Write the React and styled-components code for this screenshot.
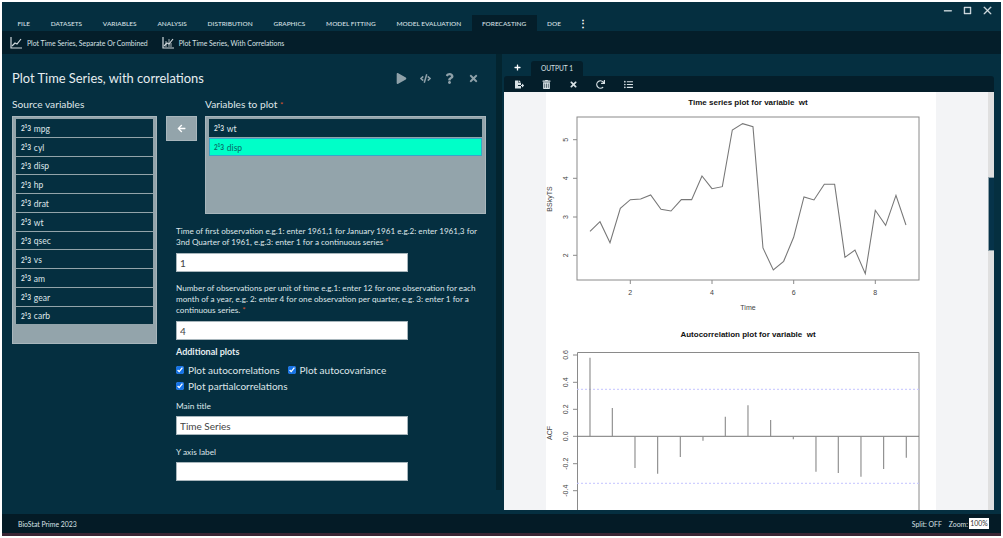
import React from 'react';
import styled, { createGlobalStyle } from 'styled-components';
import {
  FaPlay, FaCode, FaQuestion, FaTimes, FaArrowLeft, FaPlus, FaFileExport,
  FaTrashAlt, FaRedo, FaListUl,
} from 'react-icons/fa';
import { VscChromeMinimize, VscChromeMaximize, VscChromeClose } from 'react-icons/vsc';

const GlobalStyle = createGlobalStyle`
  html, body {
    margin: 0;
    padding: 0;
    background: #fff;
    overflow: hidden;
  }
  * { box-sizing: border-box; }
`;

const UI_FONT = `Lato, "Noto Sans", sans-serif`;

const tabs = ['File', 'Datasets', 'Variables', 'Analysis', 'Distribution', 'Graphics', 'Model Fitting', 'Model Evaluation', 'Forecasting', 'DOE'];
const sourceVars = ['mpg', 'cyl', 'disp', 'hp', 'drat', 'wt', 'qsec', 'vs', 'am', 'gear', 'carb'];

const seriesPoints = '150,424 180,395 210,458 241,355 271,329 302,327 332,315 363,358 393,363 424,329 455,329 486,258 516,296 547,290 577,120 608,101 639,110 669,474 700,540 731,514 761,442 792,321 822,330 853,283 884,283 915,502 945,480 976,551 1006,361 1037,406 1068,316 1098,405';
const acfBars = [[150, 113], [217, 264], [285, 444], [353, 461], [421, 411], [489, 362], [556, 290], [624, 256], [692, 300], [760, 358], [828, 455], [895, 459], [963, 470], [1031, 447], [1099, 413]];

const LineChartIcon = ({ bars }) => (
  <svg width="12" height="12" viewBox="0 0 12 12" fill="none" stroke="#d0d8dc" strokeWidth="1.2">
    <path d="M1 0v11h11" />
    <path d="M2 9l3-3 2 1 4-5" />
    {bars && <path d="M4 10V4M7 10V2M9 10V6" strokeWidth=".8" />}
  </svg>
);

const PlotImage = () => (
  <PlotSvg viewBox="546 92 390 418">
    <ChartTitle x="748" y="104.5">Time series plot for variable  wt</ChartTitle>
    <rect x="577" y="117" width="342" height="163" fill="none" stroke="#8a8a8a" />
    <g transform="translate(540 90) scale(0.3333)">
      <polyline points={seriesPoints} fill="none" stroke="#777" strokeWidth="3.2" />
    </g>
    <path d="M577 139.7h-4M577 178.3h-4M577 217h-4M577 255.3h-4M630.3 280v4M712 280v4M793.7 280v4M875.3 280v4" stroke="#8a8a8a" />
    {[['5', 139.7], ['4', 178.3], ['3', 217], ['2', 255.3]].map(([t, y]) => (
      <AxisText key={t} transform={`translate(568 ${y}) rotate(-90)`}>{t}</AxisText>
    ))}
    {[['2', 630.3], ['4', 712], ['6', 793.7], ['8', 875.3]].map(([t, x]) => (
      <AxisText key={t} x={x} y="295">{t}</AxisText>
    ))}
    <AxisText x="748" y="310">Time</AxisText>
    <AxisText transform="translate(552 199) rotate(-90)">BSkyTS</AxisText>

    <ChartTitle x="748" y="336.5">Autocorrelation plot for variable  wt</ChartTitle>
    <path d="M577.5 520V352.5H919V520" fill="none" stroke="#8a8a8a" />
    <path d="M577 436.3h342" stroke="#777" />
    <path d="M577 389.3h342M577 483.3h342" stroke="#c4c4ff" strokeDasharray="2 2" />
    <g transform="translate(540 320) scale(0.3333)">
      {acfBars.map(([x, y]) => (
        <line key={x} x1={x} x2={x} y1={349} y2={y} stroke="#8c8c8c" strokeWidth="3.4" />
      ))}
    </g>
    <path d="M577 355h-4M577 382.3h-4M577 409.3h-4M577 436.3h-4M577 463.7h-4M577 490.7h-4" stroke="#8a8a8a" />
    {[['0.6', 355], ['0.4', 382.3], ['0.2', 409.3], ['0.0', 436.3], ['-0.2', 463.7], ['-0.4', 490.7]].map(([t, y]) => (
      <AxisText key={t} transform={`translate(568 ${y}) rotate(-90)`}>{t}</AxisText>
    ))}
    <AxisText transform="translate(552 433) rotate(-90)">ACF</AxisText>
  </PlotSvg>
);

const VarItem = ({ name, selected }) => (
  <Item $selected={selected}>
    <NumIcon>2<sup>1</sup>3</NumIcon>
    {name}
  </Item>
);

const App = () => (
  <>
    <GlobalStyle />
    <Page>
      <Window>
        <TitleBar>
          <WinButton><VscChromeMinimize /></WinButton>
          <WinButton><VscChromeMaximize /></WinButton>
          <WinButton><VscChromeClose /></WinButton>
        </TitleBar>

        <TabBar>
          {tabs.map((t) => (
            <Tab key={t} $active={t === 'Forecasting'}>{t}</Tab>
          ))}
          <MoreTab>⋮</MoreTab>
        </TabBar>

        <SubBar>
          <SubItem><LineChartIcon />Plot Time Series, Separate Or Combined</SubItem>
          <SubItem><LineChartIcon bars />Plot Time Series, With Correlations</SubItem>
        </SubBar>

        <Main>
          <LeftPane>
            <DialogHeader>
              <DialogTitle>Plot Time Series, with correlations</DialogTitle>
              <DialogActions>
                <FaPlay />
                <FaCode />
                <FaQuestion />
                <FaTimes />
              </DialogActions>
            </DialogHeader>

            <Columns>
              <SourceColumn>
                <BoxLabel>Source variables</BoxLabel>
                <VarBox $height={228}>
                  {sourceVars.map((v) => <VarItem key={v} name={v} />)}
                </VarBox>
              </SourceColumn>

              <RightColumn>
                <TargetRow>
                  <ArrowButton><FaArrowLeft /></ArrowButton>
                  <TargetColumn>
                    <BoxLabel>Variables to plot <Req>*</Req></BoxLabel>
                    <VarBox $height={98}>
                      <VarItem name="wt" />
                      <VarItem name="disp" selected />
                    </VarBox>
                  </TargetColumn>
                </TargetRow>

                <Form>
                  <HelpText $top={12}>
                    Time of first observation e.g.1: enter 1961,1 for January 1961 e.g.2: enter 1961,3 for 3nd Quarter of 1961, e.g.3: enter 1 for a continuous series <Req>*</Req>
                  </HelpText>
                  <TextBox value="1" readOnly $top={5} />
                  <HelpText $top={11}>
                    Number of observations per unit of time e.g.1: enter 12 for one observation for each month of a year, e.g. 2: enter 4 for one observation per quarter, e.g. 3: enter 1 for a continuous series. <Req>*</Req>
                  </HelpText>
                  <TextBox value="4" readOnly $top={5} />
                  <SectionLabel>Additional plots</SectionLabel>
                  <CheckRow>
                    <CheckLabel><input type="checkbox" checked readOnly />Plot autocorrelations</CheckLabel>
                    <CheckLabel><input type="checkbox" checked readOnly />Plot autocovariance</CheckLabel>
                  </CheckRow>
                  <CheckRow>
                    <CheckLabel><input type="checkbox" checked readOnly />Plot partialcorrelations</CheckLabel>
                  </CheckRow>
                  <FieldLabel $top={6}>Main title</FieldLabel>
                  <TextBox value="Time Series" readOnly $top={4} />
                  <FieldLabel $top={11}>Y axis label</FieldLabel>
                  <TextBox value="" readOnly $top={4} />
                </Form>
              </RightColumn>
            </Columns>
          </LeftPane>

          <Splitter><SplitterThumb /></Splitter>

          <RightPane>
            <OutputTabs>
              <AddTab><FaPlus /></AddTab>
              <OutputTab>OUTPUT 1</OutputTab>
            </OutputTabs>
            <OutputTools>
              <FaFileExport />
              <FaTrashAlt />
              <FaTimes />
              <FaRedo />
              <FaListUl />
            </OutputTools>
            <OutputBody>
              <PlotGutter>
                <PlotImage />
              </PlotGutter>
              <ScrollTrack><ScrollThumb /></ScrollTrack>
            </OutputBody>
          </RightPane>
        </Main>

        <StatusBar>
          <span>BioStat Prime 2023</span>
          <StatusRight>
            <span>Split: OFF</span>
            <ZoomWrap>Zoom:<ZoomValue>100%</ZoomValue></ZoomWrap>
          </StatusRight>
        </StatusBar>
      </Window>
      <BottomEdge />
    </Page>
  </>
);

const Page = styled.div`
  width: 1003px;
  height: 538px;
  padding: 2px 2px 0;
  background: #fff;
  font-family: ${UI_FONT};
  color: #dfe6e9;
`;

const Window = styled.div`
  width: 999px;
  height: 531px;
  display: flex;
  flex-direction: column;
  background: #052f40;
`;

const BottomEdge = styled.div`
  width: 999px;
  height: 3px;
  background: #3b2534;
`;

const TitleBar = styled.div`
  height: 13px;
  display: flex;
  justify-content: flex-end;
  align-items: center;
  padding-right: 7px;
  gap: 7px;
`;

const WinButton = styled.span`
  width: 13px;
  display: flex;
  justify-content: center;
  color: #e6edf0;
  font-size: 11px;
  margin-top: 3px;

  svg {
    stroke: currentColor;
    stroke-width: 0.7;
  }
`;

const TabBar = styled.div`
  height: 16px;
  display: flex;
  padding-left: 5px;
`;

const Tab = styled.div`
  height: 16px;
  line-height: 17px;
  padding: 0 10.4px;
  font-size: 6.5px;
  font-weight: 500;
  text-transform: uppercase;
  white-space: nowrap;
  color: #d8e1e5;
  background: ${(p) => (p.$active ? '#041e2a' : 'transparent')};
`;

const MoreTab = styled(Tab)`
  padding-left: 7px;
  font-size: 10px;
  font-weight: 700;
  line-height: 16px;
  color: #fff;
`;

const SubBar = styled.div`
  height: 23px;
  background: #041e2a;
  display: flex;
  align-items: center;
  padding-left: 8px;
  gap: 14px;
`;

const SubItem = styled.div`
  display: flex;
  align-items: center;
  gap: 5px;
  font-size: 6.9px;
  color: #d8e1e5;
  white-space: nowrap;
`;

const Main = styled.div`
  flex: 1;
  min-height: 0;
  display: flex;
`;

const LeftPane = styled.div`
  width: 493px;
  padding: 15px 0 0 10px;
`;

const DialogHeader = styled.div`
  height: 18px;
  display: flex;
  align-items: center;
  justify-content: space-between;
  padding-right: 16px;
`;

const DialogTitle = styled.div`
  font-size: 12.9px;
  color: #e6edf0;
`;

const DialogActions = styled.div`
  display: flex;
  align-items: center;
  gap: 13px;
  color: #8fa1a9;
  font-size: 11px;
`;

const Columns = styled.div`
  display: flex;
  margin-top: 10px;
  gap: 9px;
`;

const SourceColumn = styled.div`
  width: 145px;
`;

const RightColumn = styled.div`
  width: 320px;
`;

const TargetRow = styled.div`
  display: flex;
  gap: 8px;
`;

const TargetColumn = styled.div`
  width: 281px;
`;

const BoxLabel = styled.div`
  height: 19px;
  line-height: 15px;
  font-size: 10.2px;
  color: #dfe6e9;
`;

const Req = styled.span`
  color: #d9532c;
  font-size: 8px;
  line-height: 1;
`;

const VarBox = styled.div`
  height: ${(p) => p.$height}px;
  background: #93a4ab;
  border: 1px solid #a8b6bc;
  padding: 2px 3px;
  display: flex;
  flex-direction: column;
  gap: 1px;
`;

const Item = styled.div`
  height: 17.75px;
  padding: 2px 0 0 4px;
  display: flex;
  align-items: center;
  gap: 3px;
  font-size: 8.5px;
  color: ${(p) => (p.$selected ? '#0a6a66' : '#dfe6e9')};
  background: ${(p) => (p.$selected ? '#00ffc8' : '#052f40')};
  border: 1px solid ${(p) => (p.$selected ? '#3aa6c9' : '#06303f')};
`;

const NumIcon = styled.span`
  font-size: 6.5px;
  font-weight: 700;
  letter-spacing: -0.2px;

  sup {
    font-size: 5px;
    line-height: 0;
    vertical-align: 3.5px;
  }
`;

const ArrowButton = styled.div`
  width: 31px;
  height: 25px;
  margin-top: 19px;
  background: #93a4ab;
  border: 1px solid #a8b6bc;
  color: #fff;
  font-size: 9px;
  display: flex;
  align-items: center;
  justify-content: center;
`;

const Form = styled.div`
  padding-left: 10px;
  width: 315px;
`;

const HelpText = styled.div`
  margin-top: ${(p) => p.$top}px;
  font-size: 8.15px;
  line-height: 11px;
  color: #dfe6e9;
`;

const TextBox = styled.input`
  display: block;
  width: 232px;
  height: 19px;
  margin-top: ${(p) => p.$top}px;
  padding: 0 3px;
  border: 1px solid #a8b6bc;
  background: #fff;
  font-family: ${UI_FONT};
  font-size: 10px;
  color: #444;
  outline: none;
`;

const SectionLabel = styled.div`
  margin: 6px 0 4px;
  height: 12px;
  line-height: 12px;
  font-size: 9px;
  font-weight: 700;
  color: #e6edf0;
`;

const CheckRow = styled.div`
  height: 16px;
  display: flex;
  align-items: center;
  gap: 8px;
`;

const CheckLabel = styled.label`
  display: flex;
  align-items: center;
  gap: 4px;
  font-size: 10px;
  color: #dfe6e9;

  input {
    width: 8px;
    height: 8px;
    margin: 0;
    accent-color: #1673e6;
  }
`;

const FieldLabel = styled.div`
  margin-top: ${(p) => p.$top}px;
  height: 12px;
  line-height: 12px;
  font-size: 8.3px;
  color: #dfe6e9;
`;

const Splitter = styled.div`
  width: 9px;
  padding-left: 1px;
  height: 456px;
`;

const SplitterThumb = styled.div`
  width: 6px;
  height: 436px;
  background: #03242f;
`;

const RightPane = styled.div`
  width: 490px;
  display: flex;
  flex-direction: column;
`;

const OutputTabs = styled.div`
  height: 22px;
  padding-top: 7px;
  display: flex;
  align-items: flex-end;
`;

const AddTab = styled.div`
  width: 27px;
  height: 15px;
  padding-left: 10px;
  padding-bottom: 2px;
  display: flex;
  align-items: center;
  font-size: 7px;
  color: #fff;
`;

const OutputTab = styled.div`
  width: 52px;
  height: 15px;
  line-height: 15px;
  text-align: center;
  font-size: 6.6px;
  color: #d8e1e5;
  background: #041e2a;
  border-radius: 3px 3px 0 0;
`;

const OutputTools = styled.div`
  height: 16px;
  background: #041e2a;
  border-radius: 3px 3px 0 0;
  display: flex;
  align-items: center;
  padding-left: 10.5px;
  gap: 18.3px;
  font-size: 9px;
  color: #d8e1e5;
`;

const OutputBody = styled.div`
  height: 418px;
  display: flex;
  background: #f3f4f6;
`;

const PlotGutter = styled.div`
  flex: 1;
  padding-left: 42px;
`;

const PlotSvg = styled.svg`
  display: block;
  width: 390px;
  height: 418px;
  background: #fff;
`;

const ChartTitle = styled.text`
  font-family: "Liberation Sans", Arial, sans-serif;
  font-size: 8px;
  font-weight: 700;
  text-anchor: middle;
  fill: #111;
  white-space: pre;
`;

const AxisText = styled.text`
  font-family: "Liberation Sans", Arial, sans-serif;
  font-size: 7px;
  text-anchor: middle;
  fill: #444;
`;

const ScrollTrack = styled.div`
  width: 6px;
  background: #e0e0e0;
  padding-top: 85px;
`;

const ScrollThumb = styled.div`
  height: 74px;
  background: #06334a;
  border: 1px solid #8fa1a9;
  border-width: 1px 0 1px 1px;
`;

const StatusBar = styled.div`
  height: 19px;
  background: #041b26;
  display: flex;
  align-items: center;
  justify-content: space-between;
  padding: 0 12px 0 16px;
  font-size: 6.9px;
  color: #d8e1e5;
`;

const StatusRight = styled.div`
  display: flex;
  align-items: center;
  gap: 7px;
`;

const ZoomWrap = styled.div`
  display: flex;
  align-items: center;
  gap: 1px;
`;

const ZoomValue = styled.span`
  width: 20px;
  height: 11px;
  line-height: 11px;
  text-align: center;
  background: #fff;
  color: #333;
`;

export default App;
